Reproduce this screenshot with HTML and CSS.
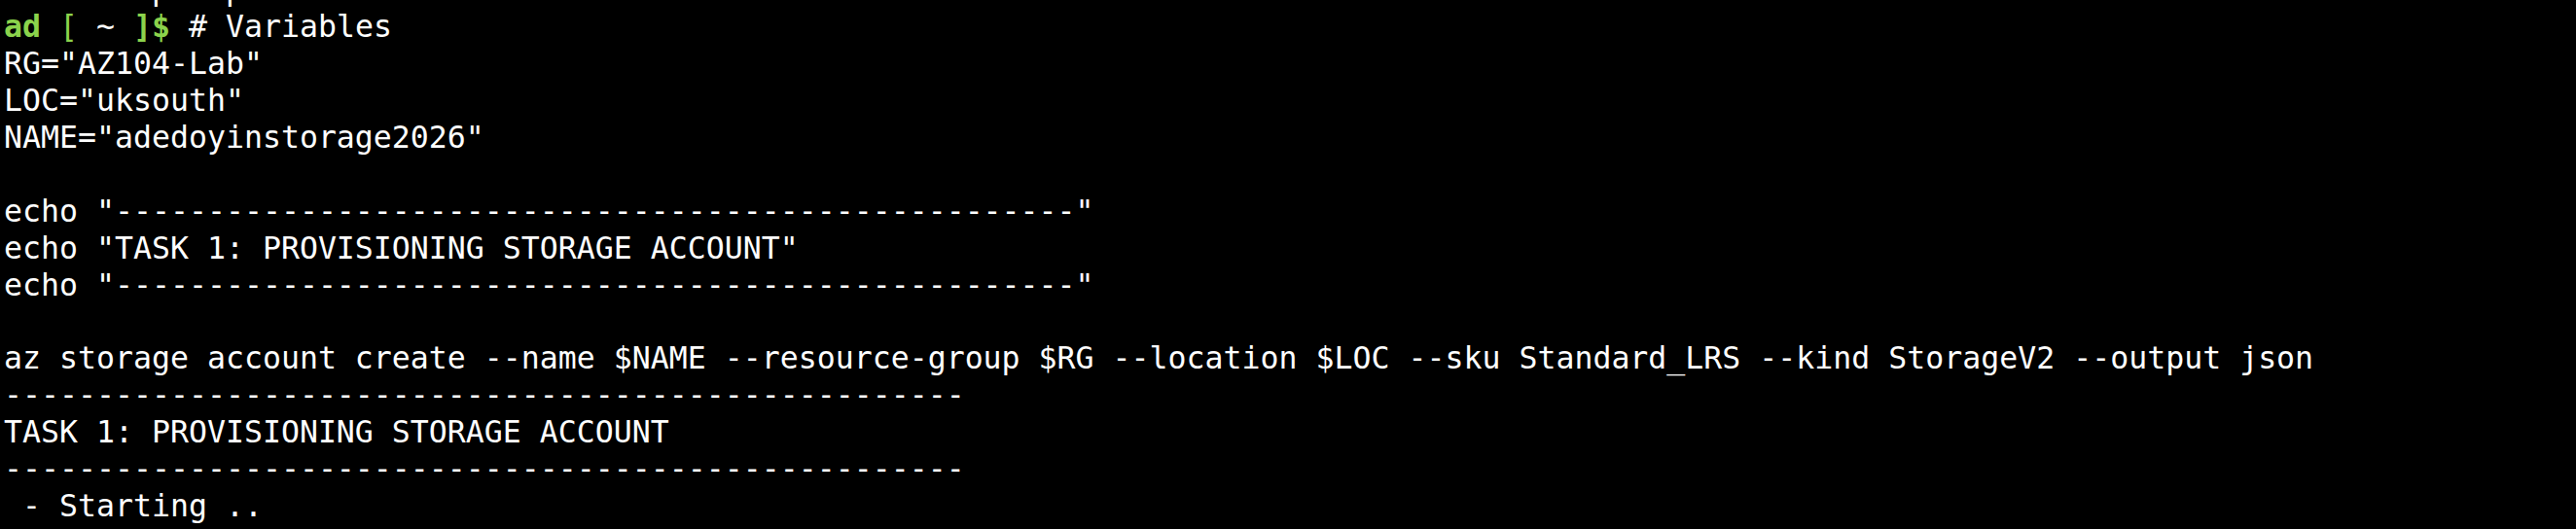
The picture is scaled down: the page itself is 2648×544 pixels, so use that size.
FILE: index.html
```html
<!DOCTYPE html>
<html>
<head>
<meta charset="utf-8">
<link rel="stylesheet" href="styles.css">
</head>
<body>
<pre class="term"><span class="line">Session prompt loaded.</span>
<span class="line"><span class="pr">ad</span> <span class="pr-b">[</span> <span class="tilde">~</span> <span class="pr">]$</span> # Variables</span>
<span class="line">RG="AZ104-Lab"</span>
<span class="line">LOC="uksouth"</span>
<span class="line">NAME="adedoyinstorage2026"</span>
<span class="line"></span>
<span class="line">echo "----------------------------------------------------"</span>
<span class="line">echo "TASK 1: PROVISIONING STORAGE ACCOUNT"</span>
<span class="line">echo "----------------------------------------------------"</span>
<span class="line"></span>
<span class="line">az storage account create --name $NAME --resource-group $RG --location $LOC --sku Standard_LRS --kind StorageV2 --output json</span>
<span class="line">----------------------------------------------------</span>
<span class="line">TASK 1: PROVISIONING STORAGE ACCOUNT</span>
<span class="line">----------------------------------------------------</span>
<span class="line"> - Starting ..</span>
<span class="line">/</span></pre>
</body>
</html>
```

FILE: styles.css
```css
html, body {
  margin: 0;
  padding: 0;
  background: #000;
  overflow: hidden;
}

.term {
  margin: -29px 0 0 0;
  padding: 0 0 0 4px;
  font-family: "DejaVu Sans Mono", monospace;
  font-size: 31.55px;
  line-height: 37.93px;
  color: #ffffff;
  white-space: pre;
}

.pr {
  color: #8bd34c;
  font-weight: bold;
}

.pr-b {
  color: #8bd34c;
}

.tilde {
  color: #ffffff;
}
```
